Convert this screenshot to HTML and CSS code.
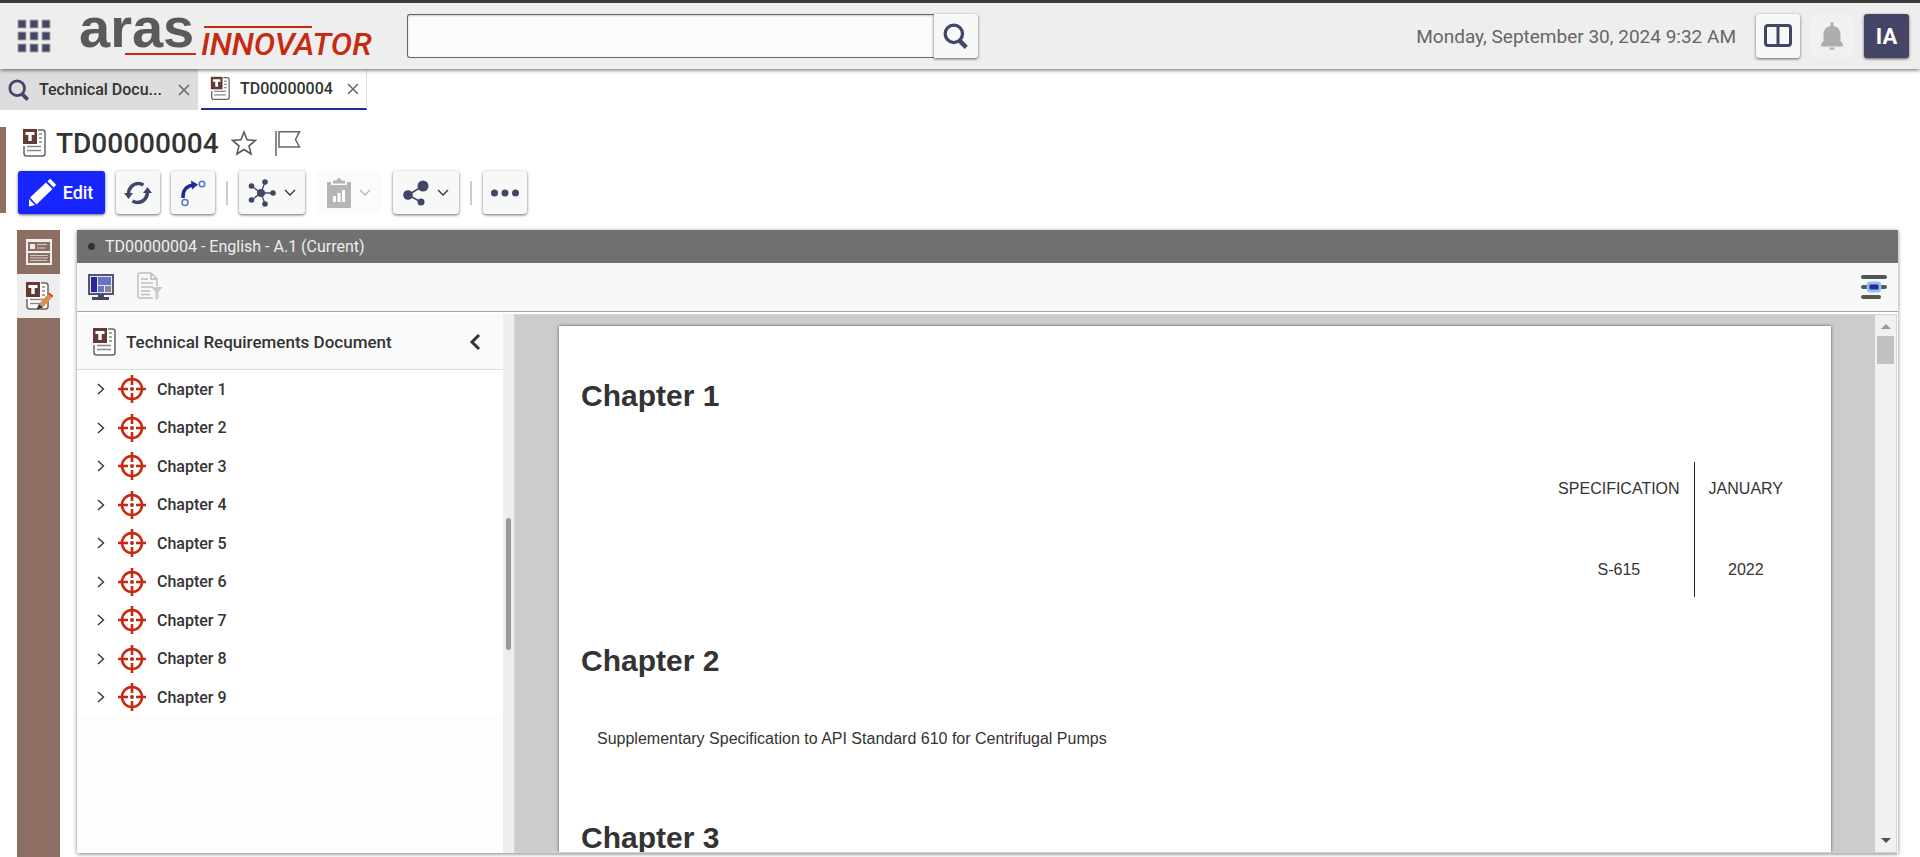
FILE: index.html
```html
<!DOCTYPE html>
<html lang="en">
<head>
    <meta charset="UTF-8">
    <meta name="viewport" content="width=device-width, initial-scale=1.0">
    <title>Aras Innovator</title>
    <link rel="stylesheet" href="styles.css">
</head>
<body>
    <!-- shared icons -->
    <svg class="sprite" aria-hidden="true">
        <symbol id="icon-search" viewBox="0 0 24 24">
            <circle cx="10" cy="10" r="8" fill="none" stroke="#444466" stroke-width="3"/>
            <path d="M15.5 16.5l6 6" stroke="#444466" stroke-width="4"/>
        </symbol>
        <symbol id="icon-doc" viewBox="0 0 24 30">
            <path d="M16 2h4.500q2.500 0 2.500 2.500v21q0 2.500-2.500 2.500h-16q-2.500 0-2.500-2.500V18" fill="#fff" stroke="#666" stroke-width="1.500"/>
            <path d="M17 6h3M17 10h3M17 14h3M5 22.500h14M5 18.500h14" stroke="#888" stroke-width="1.500"/>
            <rect x="1" y="1" width="14" height="15" fill="#633a34"/>
            <path d="M3.500 4h9v3H9.700v6H6.300V7H3.500z" fill="#fff"/>
        </symbol>
        <symbol id="icon-target" viewBox="0 0 28 28">
            <g stroke="#c62a10" fill="none">
                <circle cx="14" cy="14" r="10" stroke-width="2.600"/>
                <path d="M14 0v10M14 18v10M0 14h10M18 14h10" stroke-width="2.600"/>
            </g>
            <circle cx="14" cy="14" r="2" fill="#c62a10"/>
        </symbol>
        <symbol id="icon-close" viewBox="0 0 12 12">
            <path d="M1 1l10 10M11 1L1 11" stroke="#666" stroke-width="1.500"/>
        </symbol>
        <symbol id="icon-right" viewBox="0 0 8 14">
            <path d="M1 2l5.500 5L1 12" fill="none" stroke="#333" stroke-width="1.400"/>
        </symbol>
        <symbol id="icon-down" viewBox="0 0 12 8">
            <path d="M1 1l5 5 5-5" fill="none" stroke="currentColor" stroke-width="1.300"/>
        </symbol>
    </svg>

    <header class="header">
        <button class="apps" aria-label="Menu">
            <svg width="34" height="34" viewBox="0 0 34 34" fill="#444466" stroke="#aaa">
                <path d="M1 1h8v8H1zM13 1h8v8h-8zM25 1h8v8h-8zM1 13h8v8H1zM13 13h8v8h-8zM25 13h8v8h-8zM1 25h8v8H1zM13 25h8v8h-8zM25 25h8v8h-8z"/>
            </svg>
        </button>
        <svg class="logo" width="304" height="66" viewBox="0 0 304 66">
            <text class="logo-aras" x="0" y="44">aras</text>
            <text class="logo-innovator" x="122" y="52">INNOVATOR</text>
            <path d="M46 51h71M125 24h108" stroke="#c62a10" stroke-width="2"/>
        </svg>
        <form class="search">
            <input type="text" class="search-input" aria-label="Search">
            <button type="button" class="btn search-btn" aria-label="Search">
                <svg width="26" height="26"><use href="#icon-search"/></svg>
            </button>
        </form>
        <time class="date">Monday, September 30, 2024 9:32 AM</time>
        <button class="btn split-btn" aria-label="Split view">
            <svg width="28" height="24" viewBox="0 0 28 24" fill="none" stroke="#444466">
                <rect x="1.500" y="1.500" width="25" height="20" rx="2.500" stroke-width="3"/>
                <path d="M14 2v20" stroke-width="3"/>
            </svg>
        </button>
        <button class="btn btn-off bell-btn" aria-label="Notifications" disabled>
            <svg width="24" height="28" viewBox="0 0 24 28" fill="#aeaeae">
                <path d="M12 0q1.500 0 1.500 1.500V4c5 1 7 4.500 7 9v6l2.500 3v2.500H1V22l2.500-3v-6c0-4.500 2-8 7-9V1.500Q10.500 0 12 0zM9 25.500h6q-.5 2.500-3 2.500t-3-2.500z"/>
            </svg>
        </button>
        <button class="btn user-btn">IA</button>
    </header>

    <nav class="tabs">
        <div class="tab">
            <svg width="22" height="22"><use href="#icon-search"/></svg>
            <a href="#" class="tab-name">Technical Docu...</a>
            <button class="close" aria-label="Close"><svg width="12" height="12"><use href="#icon-close"/></svg></button>
        </div>
        <div class="tab active">
            <svg width="20" height="25"><use href="#icon-doc"/></svg>
            <a href="#" class="tab-name">TD00000004</a>
            <button class="close" aria-label="Close"><svg width="12" height="12"><use href="#icon-close"/></svg></button>
        </div>
    </nav>

    <section class="item-head">
        <div class="title-row">
            <svg width="24" height="30"><use href="#icon-doc"/></svg>
            <h1>TD00000004</h1>
            <button class="plain" aria-label="Favorite">
                <svg width="26" height="26" viewBox="0 0 26 26" fill="none" stroke="#555" stroke-width="1.500">
                    <path d="M13 2l3.100 7.800 8.400.6-6.500 5.400 2.100 8.200L13 19.500 5.900 24 8 15.800 1.500 10.400l8.400-.6z"/>
                </svg>
            </button>
            <button class="plain" aria-label="Flag">
                <svg width="26" height="26" viewBox="0 0 26 26" fill="none" stroke="#666" stroke-width="1.500">
                    <path d="M1 1v25M4 1.700h20.500l-4 7.800 4 7.500H4z"/>
                </svg>
            </button>
        </div>
        <div class="toolbar">
            <button class="btn edit-btn">
                <svg width="28" height="28" viewBox="0 0 28 28" fill="#fff">
                    <path d="M1 20l6 6-6 1.500zM2 18.500L18 3.500l6.500 6.500L8.500 25.500zM19.500 2.200l2-2q.8-.5 1.500.2l4.500 4.500q.7.800 0 1.600l-1.800 2z"/>
                </svg>
                Edit
            </button>
            <button class="btn icon-btn" aria-label="Refresh">
                <svg width="28" height="26" viewBox="0 0 28 26" fill="none" stroke="#444466" stroke-width="3.500">
                    <path d="M4.500 14C4.500 8 9 3.500 14.500 3.500q2.500 0 5 1.500M23.500 12c0 6-4.500 10.500-10 10.500q-2.500 0-5-1.500"/>
                    <path d="M0 13h9l-4.500 6zM19 13h9l-4.500-6z" fill="#444466" stroke="none"/>
                </svg>
            </button>
            <button class="btn icon-btn" aria-label="Promote">
                <svg width="26" height="28" viewBox="0 0 26 28" fill="none">
                    <path d="M3 19C2.500 11 7 6.500 14 6" stroke="#1f2a94" stroke-width="3.500"/>
                    <path d="M11 1.500L18 5.500l-6 5z" fill="#1f2a94"/>
                    <circle cx="22" cy="5" r="2.800" stroke="#4a78c8" stroke-width="1.500"/>
                    <circle cx="5" cy="23.500" r="3" stroke="#4a78c8" stroke-width="1.500"/>
                </svg>
            </button>
            <span class="sep"></span>
            <button class="btn menu-btn" aria-label="Navigate">
                <svg width="28" height="28" viewBox="0 0 28 28" fill="#444466" stroke="#444466">
                    <path d="M13 14L3.500 7M13 14L3.500 21M13 14l4-11M13 14l4 11M13 14h12" stroke-width="1.300"/>
                    <g stroke="none">
                        <circle cx="13" cy="14" r="4"/><circle cx="3.500" cy="7" r="2.800"/><circle cx="3.500" cy="21" r="2.800"/>
                        <circle cx="17" cy="3" r="2.800"/><circle cx="17" cy="25" r="2.800"/><circle cx="25" cy="14" r="2.800"/>
                    </g>
                </svg>
                <svg width="12" height="8"><use href="#icon-down"/></svg>
            </button>
            <button class="btn btn-off menu-btn" aria-label="Reports" disabled>
                <svg width="24" height="30" viewBox="0 0 24 30" fill="#b5b5b5">
                    <path d="M0 4h4v3h16V4h4v26H0z"/>
                    <path d="M6 2.500h3.500q.5-2.500 2.500-2.500t2.500 2.500H18v3H6z"/>
                    <path d="M6 18h3v6H6zM10.500 15h3v9h-3zM15 12h3v12h-3z" fill="#fff"/>
                </svg>
                <svg width="12" height="8"><use href="#icon-down"/></svg>
            </button>
            <button class="btn menu-btn" aria-label="Share">
                <svg width="26" height="26" viewBox="0 0 26 26" fill="#444466">
                    <path d="M20 6L5 15l13 7" fill="none" stroke="#444466" stroke-width="1.500"/>
                    <circle cx="20" cy="6" r="5.500"/><circle cx="5" cy="15" r="4.800"/><circle cx="18" cy="22" r="3.500"/>
                </svg>
                <svg width="12" height="8"><use href="#icon-down"/></svg>
            </button>
            <span class="sep"></span>
            <button class="btn icon-btn" aria-label="More">
                <svg width="28" height="8" viewBox="0 0 28 8" fill="#444466">
                    <circle cx="3.500" cy="4" r="3.500"/><circle cx="14" cy="4" r="3.500"/><circle cx="24.500" cy="4" r="3.500"/>
                </svg>
            </button>
        </div>
    </section>

    <main class="main">
        <aside class="sidebar">
            <button class="side-btn" aria-label="Form">
                <svg width="26" height="26" viewBox="0 0 26 26">
                    <path d="M0 0h26v26H0z" fill="#eee"/>
                    <path d="M2 3h22v9H2zM2 14h22v10H2z" fill="#8d6e63"/>
                    <path d="M4 5h5v5H4z" fill="#eee"/>
                    <path d="M11 5.500h10M11 9h8M4 16.500h18M4 19h18M4 21.500h17" stroke="#ccc" stroke-width="1.200"/>
                </svg>
            </button>
            <button class="side-btn selected" aria-label="Document editor">
                <svg width="28" height="30" viewBox="0 0 28 30">
                    <use href="#icon-doc" width="24" height="30"/>
                    <path d="M14 23L23 13l4 3.500-9 10z" fill="#dd9048"/>
                    <path d="M23 13l1.500-1.300 4 3.300-1.500 1.500z" fill="#d0451f"/>
                    <path d="M14 23l4 3.500-6.500 2z" fill="#333"/>
                </svg>
            </button>
        </aside>

        <section class="panel">
            <div class="panel-title"><span class="dot"></span>TD00000004 - English - A.1 (Current)</div>
            <div class="panel-tools">
                <button class="plain" aria-label="Layout">
                    <svg width="26" height="26" viewBox="0 0 26 26">
                        <path d="M0 0h26v21H0z" fill="#555570"/>
                        <path d="M2 2h22v17H2z" fill="#e4e8f4"/>
                        <path d="M3 3h6v15H3z" fill="#25299a"/>
                        <path d="M10 3h13v8H10zM10 12h6v6h-6z" fill="#6674c8"/>
                        <path d="M17 12h6v6h-6z" fill="#888"/>
                        <path d="M10 21h6v2h5v3H4v-3h6z" fill="#444466"/>
                    </svg>
                </button>
                <button class="plain" aria-label="Filter" disabled>
                    <svg width="26" height="30" viewBox="0 0 26 30" fill="none" stroke="#bdbdbd" stroke-width="1.500">
                        <path d="M20 14V7l-6-6H3Q1 1 1 3v21q0 2 2 2h13M14 1v6h6M4 7h7M4 11h12M4 15h12M4 19h9M4 22.500h9"/>
                        <path d="M14 15h12l-4.500 5v6L18.500 29v-9z" fill="#ccc" stroke="none"/>
                    </svg>
                </button>
                <button class="plain tools-end" aria-label="Options">
                    <svg width="28" height="26" viewBox="0 0 28 26">
                        <path d="M3 3h22M3 13h22M3 23h16" stroke="#555" stroke-width="4" stroke-linecap="round"/>
                        <rect x="8" y="9" width="12" height="8" rx="2.500" fill="#2a2aa0" stroke="#90c4ee" stroke-width="2.800"/>
                    </svg>
                </button>
            </div>

            <div class="panel-body">
                <div class="tree">
                    <div class="tree-head">
                        <svg width="24" height="30"><use href="#icon-doc"/></svg>
                        <h2>Technical Requirements Document</h2>
                        <button class="plain" aria-label="Collapse">
                            <svg width="12" height="18" viewBox="0 0 12 18"><path d="M10 2L3 9l7 7" fill="none" stroke="#333" stroke-width="3"/></svg>
                        </button>
                    </div>
                    <ul class="tree-list">
                        <li><svg width="8" height="14"><use href="#icon-right"/></svg><svg width="28" height="28"><use href="#icon-target"/></svg><span>Chapter 1</span></li>
                        <li><svg width="8" height="14"><use href="#icon-right"/></svg><svg width="28" height="28"><use href="#icon-target"/></svg><span>Chapter 2</span></li>
                        <li><svg width="8" height="14"><use href="#icon-right"/></svg><svg width="28" height="28"><use href="#icon-target"/></svg><span>Chapter 3</span></li>
                        <li><svg width="8" height="14"><use href="#icon-right"/></svg><svg width="28" height="28"><use href="#icon-target"/></svg><span>Chapter 4</span></li>
                        <li><svg width="8" height="14"><use href="#icon-right"/></svg><svg width="28" height="28"><use href="#icon-target"/></svg><span>Chapter 5</span></li>
                        <li><svg width="8" height="14"><use href="#icon-right"/></svg><svg width="28" height="28"><use href="#icon-target"/></svg><span>Chapter 6</span></li>
                        <li><svg width="8" height="14"><use href="#icon-right"/></svg><svg width="28" height="28"><use href="#icon-target"/></svg><span>Chapter 7</span></li>
                        <li><svg width="8" height="14"><use href="#icon-right"/></svg><svg width="28" height="28"><use href="#icon-target"/></svg><span>Chapter 8</span></li>
                        <li><svg width="8" height="14"><use href="#icon-right"/></svg><svg width="28" height="28"><use href="#icon-target"/></svg><span>Chapter 9</span></li>
                    </ul>
                </div>
                <div class="splitter"><span class="handle"></span></div>
                <div class="viewer">
                    <article class="page">
                        <h3>Chapter 1</h3>
                        <table class="spec">
                            <tr><td>SPECIFICATION</td><td>JANUARY</td></tr>
                            <tr><td>S-615</td><td>2022</td></tr>
                        </table>
                        <h3>Chapter 2</h3>
                        <p>Supplementary Specification to API Standard 610 for Centrifugal Pumps</p>
                        <h3>Chapter 3</h3>
                    </article>
                    <div class="scrollbar">
                        <svg width="10" height="6" viewBox="0 0 10 6"><path d="M0 5l5-5 5 5z" fill="#999"/></svg>
                        <span class="thumb"></span>
                        <svg class="arrow-down" width="10" height="6" viewBox="0 0 10 6"><path d="M0 0h10L5 5z" fill="#505050"/></svg>
                    </div>
                </div>
            </div>
        </section>
    </main>
</body>
</html>
```
FILE: styles.css
```css
* {
    box-sizing: border-box;
}
body {
    margin: 0;
    height: 100vh;
    display: flex;
    flex-direction: column;
    overflow: hidden;
    background: #fff;
    color: #333;
    font-family: Roboto, sans-serif;
    font-size: 16px;
}
button {
    padding: 0;
    border: none;
    background: none;
    font-family: inherit;
    cursor: pointer;
}
svg {
    display: block;
    flex: none;
}
a {
    color: inherit;
    text-decoration: none;
}
h1, h2, h3, p, ul {
    margin: 0;
    padding: 0;
}
.sprite {
    display: none;
}

/* header */
.header {
    display: flex;
    align-items: center;
    flex: none;
    height: 69px;
    padding: 0 11px 0 17px;
    border-top: 3px solid #3a3a3a;
    background: #eee;
    box-shadow: 0 1px 4px rgba(0, 0, 0, 0.6);
    position: relative;
}
.logo {
    margin: 0 24px 0 28px;
    overflow: visible;
}
.logo-aras {
    font: bold 56px "Liberation Sans", sans-serif;
    fill: #5a5a58;
}
.logo-innovator {
    font: italic 500 32px Roboto, sans-serif;
    fill: #c62a10;
}
.search {
    display: flex;
    width: 571px;
}
.search-input {
    flex: 1;
    height: 44px;
    padding: 0 12px;
    border: 1px solid #666;
    border-right: none;
    border-radius: 3px 0 0 3px;
    background: #fbfbfb;
    font-size: 16px;
    box-shadow: inset 0 1px 2px #ccc;
}
.btn {
    display: flex;
    align-items: center;
    justify-content: center;
    height: 44px;
    border-radius: 3px;
    background: #f7f9f9;
    box-shadow: 0 1px 3px rgba(0, 0, 0, 0.6);
}
.btn-off {
    background: #fbfbfb;
    box-shadow: none;
    color: #b5b5b5;
}
.search-btn {
    width: 44px;
    border-radius: 0 3px 3px 0;
}
.date {
    margin-left: auto;
    font-size: 19px;
    color: #666;
}
.split-btn {
    width: 44px;
    margin-left: 20px;
}
.bell-btn {
    width: 44px;
    margin: 0 10px;
    background: #f1f1f1;
}
.user-btn {
    width: 45px;
    background: #444466;
    color: #fff;
    font-size: 22px;
    font-weight: 700;
}

/* tabs */
.tabs {
    display: flex;
    gap: 3px;
    height: 41px;
    flex: none;
}
.tab {
    display: flex;
    align-items: center;
    gap: 9px;
    padding: 0 8px;
    background: #ddd;
    font-weight: 500;
}
.tab.active {
    gap: 10px;
    padding: 0 7px 0 9px;
    background: #fff;
    border-bottom: 2px solid #232c95;
    border-right: 1px solid #ddd;
}
.close {
    padding-left: 7px;
}
.tab.active .close {
    padding-left: 4px;
}

/* item title and toolbar */
.item-head {
    flex: none;
    height: 86px;
    margin-top: 17px;
    padding-left: 12px;
    border-left: 6px solid #8d6e63;
}
.title-row {
    display: flex;
    align-items: center;
    height: 32px;
    padding-left: 4px;
}
h1 {
    margin: 0 12px 0 10px;
    font-size: 28px;
    font-weight: 500;
}
.title-row .plain + .plain {
    margin-left: 18px;
}
.toolbar {
    display: flex;
    align-items: center;
    gap: 11px;
    margin-top: 12px;
}
.toolbar .btn {
    height: 43px;
}
.toolbar .edit-btn {
    gap: 7px;
    width: 87px;
    padding-right: 2px;
    background: #1726ff;
    color: #fff;
    font-size: 18px;
    font-weight: 500;
}
.icon-btn {
    width: 44px;
}
.menu-btn {
    gap: 8px;
    width: 66px;
    color: #333;
}
.menu-btn.btn-off {
    color: #b5b5b5;
}
.sep {
    width: 2px;
    height: 24px;
    background: #ccc;
}

/* main area */
.main {
    display: flex;
    flex: 1;
    min-height: 0;
    margin-top: 17px;
    padding: 0 22px 0 17px;
}
.sidebar {
    width: 43px;
    margin-right: 17px;
    background: #8d6e63;
}
.side-btn {
    display: flex;
    align-items: center;
    justify-content: center;
    width: 100%;
    height: 44px;
}
.side-btn.selected {
    background: #eee;
}
.panel {
    display: flex;
    flex-direction: column;
    flex: 1;
    min-width: 0;
    margin-bottom: 4px;
    box-shadow: 0 1px 4px rgba(0, 0, 0, 0.5);
}
.panel-title {
    display: flex;
    align-items: center;
    height: 33px;
    padding-left: 11px;
    background: #707070;
    color: #eee;
}
.dot {
    width: 7px;
    height: 7px;
    margin-right: 10px;
    border-radius: 50%;
    background: #333;
}
.panel-tools {
    display: flex;
    align-items: center;
    gap: 23px;
    height: 49px;
    padding: 0 10px 0 11px;
    border-bottom: 1px solid #a8a8a8;
    background: #f7f9f9;
}
.tools-end {
    margin-left: auto;
}
.panel-body {
    display: flex;
    flex: 1;
    min-height: 0;
    padding-top: 2px;
}
.tree {
    width: 426px;
    background: #fdfdfd;
}
.tree-head {
    display: flex;
    align-items: center;
    height: 56px;
    padding: 0 22px 0 15px;
    border-bottom: 1px solid #ddd;
    background: #fafafa;
}
h2 {
    flex: 1;
    margin-left: 10px;
    font-size: 17px;
    font-weight: 500;
}
.tree-list {
    display: grid;
    grid-auto-rows: 38px 39px;
    list-style: none;
    font-weight: 500;
}
.tree-list li {
    display: flex;
    align-items: center;
    padding-left: 20px;
    background: #fff;
}
.tree-list span {
    margin-left: 11px;
}
.tree-list svg + svg {
    margin-left: 13px;
}
.splitter {
    display: flex;
    align-items: center;
    justify-content: center;
    width: 11px;
    background: #eee;
}
.handle {
    width: 5px;
    height: 132px;
    border-radius: 3px;
    background: #999;
}

/* document */
.viewer {
    display: flex;
    flex: 1;
    min-width: 0;
    margin-right: 1px;
    padding-left: 44px;
    border: 1px solid #d5d5d5;
    background: #ccc;
    overflow: hidden;
}
.page {
    flex: 1;
    margin: 11px 44px 0 0;
    padding: 52px 22px 0;
    background: #fff;
    box-shadow: 0 0 3px rgba(0, 0, 0, 0.6);
    font-family: "Liberation Sans", Arial, sans-serif;
}
h3 {
    font-size: 30px;
    line-height: 36px;
}
.spec {
    margin: 48px 12px 0 auto;
    border-spacing: 0;
    text-align: center;
}
.spec td {
    padding: 0 14px;
}
.spec tr:first-child td {
    height: 54px;
}
.spec tr:last-child td {
    height: 81px;
    padding-top: 26px;
}
.spec td:first-child {
    border-right: 1px solid #222;
}
.spec + h3 {
    margin-top: 46px;
}
.page p {
    margin: 50px 16px 71px;
    line-height: 20px;
}
.scrollbar {
    display: flex;
    flex-direction: column;
    align-items: center;
    width: 21px;
    padding: 9px 0 8px;
    background: #f1f1f1;
}
.thumb {
    width: 17px;
    height: 28px;
    margin-top: 6px;
    background: #c1c1c1;
}
.arrow-down {
    margin-top: auto;
}
```
